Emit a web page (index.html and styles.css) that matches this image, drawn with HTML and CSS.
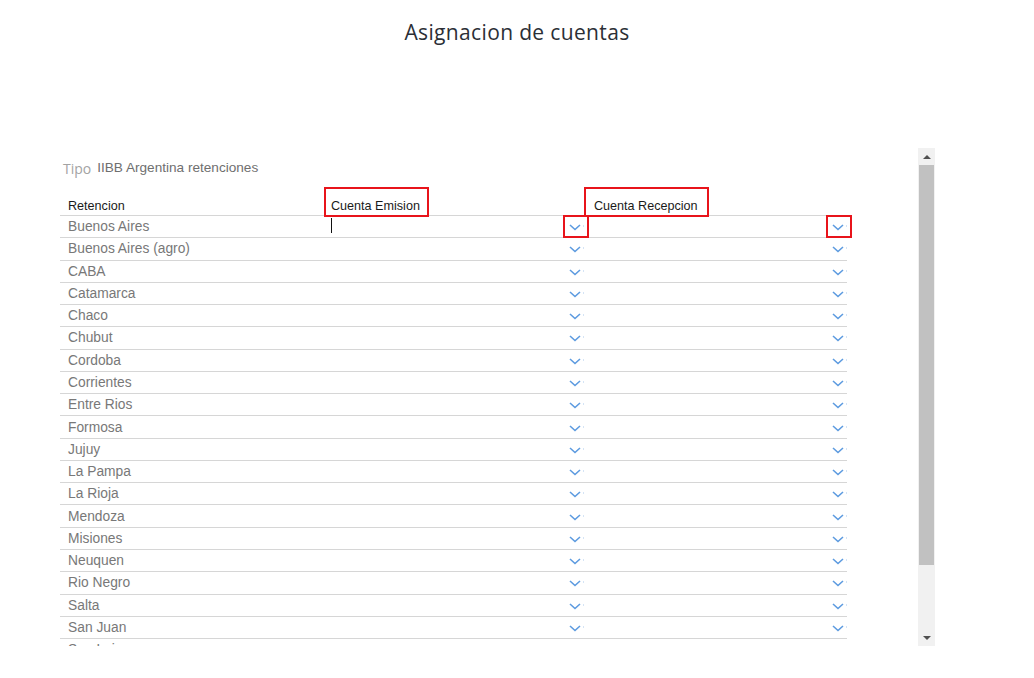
FILE: index.html
```
<!DOCTYPE html>
<html lang="es">
<head>
<meta charset="utf-8">
<title>Asignacion de cuentas</title>
<link rel="stylesheet" href="styles.css">
</head>
<body>
<h1 class="title">Asignacion de cuentas</h1>
<div class="panel">
  <div class="content">
    <div class="tipo"><span class="tipo-label">Tipo</span><span class="tipo-value">IIBB Argentina retenciones</span></div>
    <div class="table">
      <div class="row head">
        <div class="cell">Retencion</div>
        <div class="cell"><span class="mark">Cuenta Emision</span></div>
        <div class="cell"><span class="mark">Cuenta Recepcion</span></div>
      </div>
      <div class="row">
        <div class="cell name">Buenos Aires</div>
        <div class="cell sel"><span class="caret"></span><span class="chev marked"><svg viewBox="0 0 12 7" width="12" height="7"><polyline points="1,1 6,5.5 11,1"/></svg></span></div>
        <div class="cell sel"><span class="chev marked"><svg viewBox="0 0 12 7" width="12" height="7"><polyline points="1,1 6,5.5 11,1"/></svg></span></div>
      </div>
    </div>
    <div class="table" id="rows"></div>
  </div>
  <div class="scrollbar">
    <div class="arrow up"></div>
    <div class="track"><div class="thumb"></div></div>
    <div class="arrow down"></div>
  </div>
</div>
<script>
var names=["Buenos Aires (agro)","CABA","Catamarca","Chaco","Chubut","Cordoba","Corrientes","Entre Rios","Formosa","Jujuy","La Pampa","La Rioja","Mendoza","Misiones","Neuquen","Rio Negro","Salta","San Juan","San Luis","Santa Cruz","Santa Fe","Santiago del Estero","Tierra del Fuego","Tucuman"];
var chev='<span class="chev"><svg viewBox="0 0 12 7" width="12" height="7"><polyline points="1,1 6,5.5 11,1"/></svg></span>';
var h="";
names.forEach(function(n){h+='<div class="row"><div class="cell name">'+n+'</div><div class="cell sel">'+chev+'</div><div class="cell sel">'+chev+'</div></div>';});
document.getElementById("rows").innerHTML=h;
</script>
</body>
</html>
```
FILE: styles.css
```
html, body {
  margin: 0;
  padding: 0;
  background: #fff;
}
body {
  font-family: "Liberation Sans", Arial, sans-serif;
  width: 1034px;
  height: 678px;
  overflow: hidden;
}
.title {
  margin: 0;
  padding-top: 19px;
  height: 148px;
  box-sizing: border-box;
  text-align: center;
  font-family: "Open Sans", sans-serif;
  font-weight: 400;
  font-size: 21px;
  line-height: 26px;
  color: #2b2f36;
  letter-spacing: 0.35px;
}
.panel {
  display: flex;
  margin-left: 60px;
  width: 875px;
  height: 498px;
}
.content {
  flex: 1;
  overflow: hidden;
  padding-top: 10px;
}
.tipo {
  height: 18px;
  display: flex;
  align-items: center;
  padding-left: 3px;
}
.tipo-label {
  font-family: "Open Sans", sans-serif;
  font-size: 14px;
  color: #a3a3a3;
  margin-right: 6px;
  position: relative;
  top: 1px;
}
.tipo-value {
  font-size: 13.6px;
  color: #6f6f6f;
}
.table {
  width: 787px;
}
.row {
  display: grid;
  grid-template-columns: 263px 263px 261px;
  height: 22.28px;
  box-sizing: border-box;
  border-bottom: 1px solid #d6d6d6;
  align-items: center;
}
.row.head {
  margin-top: 15px;
  height: 25px;
  align-items: end;
  padding-bottom: 1px;
}
.cell {
  padding-left: 8px;
  font-size: 13.8px;
  line-height: 15px;
  color: #787878;
  position: relative;
}
.head .cell {
  color: #1a1a1a;
  font-size: 12.6px;
}
.mark {
  position: relative;
}
.mark::after {
  content: "";
  position: absolute;
  left: -7px;
  right: -9px;
  top: -12px;
  bottom: -4px;
  border: 2px solid #e8141b;
}
.cell:last-child .mark::after {
  left: -10px;
  right: -11px;
}
.sel {
  display: flex;
  align-items: center;
  justify-content: flex-end;
  height: 15px;
  padding-right: 2px;
}
.sel:last-child {
  padding-right: 0;
}
.caret {
  position: absolute;
  left: 8px;
  top: -1px;
  width: 1px;
  height: 15px;
  background: #111;
}
.chev {
  display: flex;
  align-items: center;
  position: relative;
  padding-right: 3px;
  top: 1px;
}
.chev::after {
  content: "";
  position: absolute;
  right: 0;
  top: 1px;
  width: 1px;
  height: 2px;
  background: #d5e4f5;
}
.chev svg {
  display: block;
}
.chev polyline {
  fill: none;
  stroke: #5d9be0;
  stroke-width: 1.6;
}
.chev.marked::before {
  content: "";
  position: absolute;
  left: -6px;
  right: -5px;
  top: -9px;
  bottom: -7px;
  border: 2px solid #e8141b;
}
.scrollbar {
  width: 17px;
  background: #f1f1f1;
  display: flex;
  flex-direction: column;
}
.arrow {
  height: 17px;
  display: flex;
  align-items: center;
  justify-content: center;
}
.arrow::before {
  content: "";
  width: 0;
  height: 0;
  border-left: 4px solid transparent;
  border-right: 4px solid transparent;
}
.arrow.up::before {
  border-bottom: 4px solid #505050;
}
.arrow.down::before {
  border-top: 4px solid #505050;
}
.track {
  flex: 1;
  padding: 0 1px;
}
.thumb {
  height: 400px;
  background: #c1c1c1;
}
```
